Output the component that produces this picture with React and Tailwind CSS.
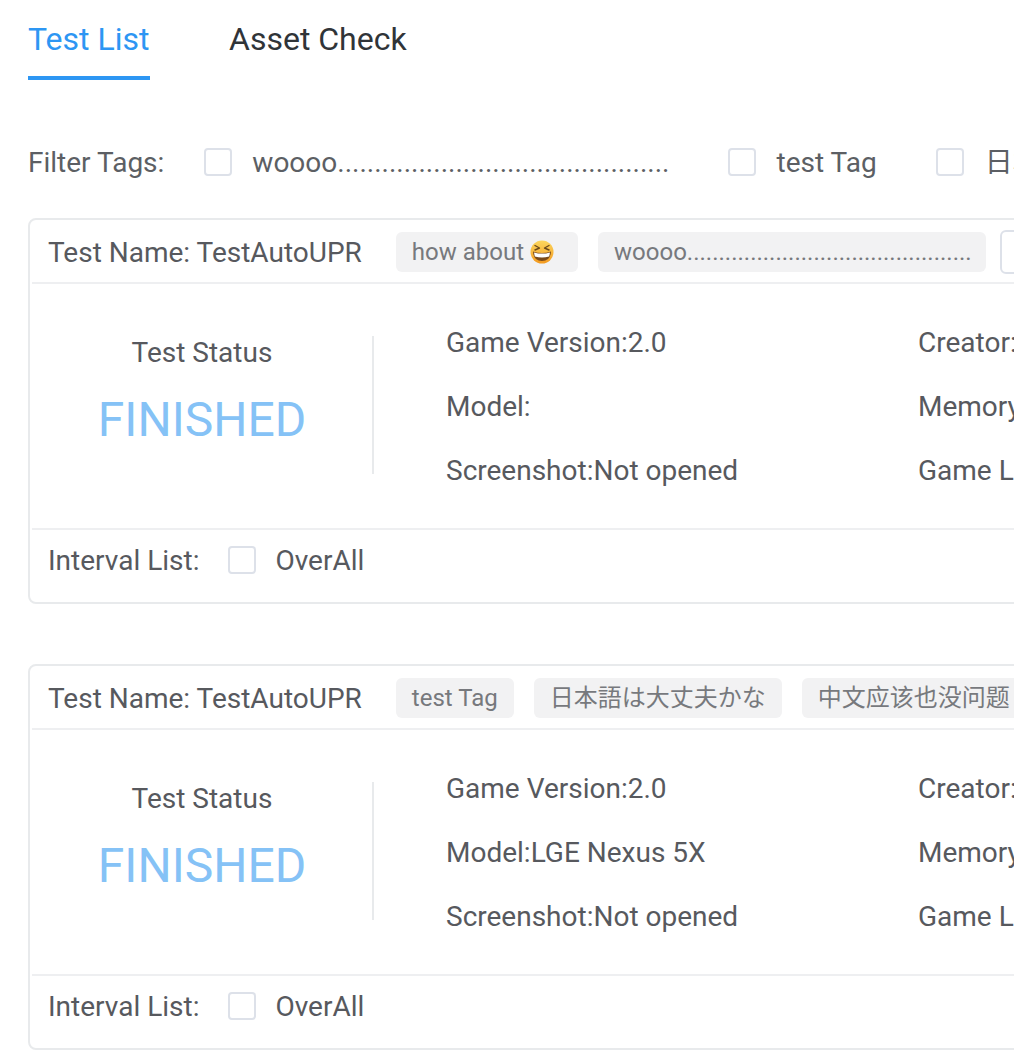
import React from "react";

const DOTS = ".............................................";

function Box() {
  return <span className="block w-[28px] h-[28px] shrink-0 bg-white border-2 border-[#dde1e9] rounded-[4px]" />;
}

function LaughEmoji() {
  return (
    <svg width="24" height="24" viewBox="0 0 24 24" className="shrink-0 ml-[6px] mr-[8px]">
      <defs>
        <linearGradient id="laugh" x1="0" y1="0" x2="0" y2="1">
          <stop offset="0" stopColor="#fcd75f" />
          <stop offset="1" stopColor="#f39a1f" />
        </linearGradient>
      </defs>
      <circle cx="12" cy="12" r="11.5" fill="url(#laugh)" />
      <path d="M5 5.5 L9.5 8 L5 10" fill="none" stroke="#6b4a1c" strokeWidth="1.4" strokeLinecap="round" strokeLinejoin="round" />
      <path d="M19 5.5 L14.5 8 L19 10" fill="none" stroke="#6b4a1c" strokeWidth="1.4" strokeLinecap="round" strokeLinejoin="round" />
      <path d="M3 11.5 Q12 14.5 21 11.5 Q20.5 21 12 21 Q3.5 21 3 11.5 Z" fill="#7a4a1a" />
      <path d="M4 12.4 Q12 14.8 20 12.4 L19.2 16.6 Q12 18.6 4.8 16.6 Z" fill="#fff" />
    </svg>
  );
}

function Tag({ children, pad = "px-[16px]" }) {
  return (
    <span className={`flex items-center h-[40px] shrink-0 ${pad} bg-[#f2f2f3] rounded-[6px] text-[24px] text-[#77797d] whitespace-nowrap`}>
      {children}
    </span>
  );
}

function Info({ children }) {
  return <div className="h-[64px] flex items-center pt-[2px] whitespace-nowrap">{children}</div>;
}

function TestCard({ tags, extra, model }) {
  return (
    <div className="w-[1200px] h-[386px] px-[2px] bg-white border-2 border-[#e8eaec] rounded-[8px]">
      {/* header */}
      <div className="h-[64px] flex items-center gap-[20px] pl-[16px] pt-[2px] border-b-2 border-[#eeeff1]">
        <span className="text-[28px] text-[#57595e] whitespace-nowrap mt-[2px] mr-[14px]">Test Name: TestAutoUPR</span>
        {tags}
        {extra}
      </div>

      {/* body */}
      <div className="h-[244px] flex items-center">
        <div className="w-[342px] h-[138px] -mt-[2px] pt-[1px] shrink-0 flex flex-col items-center border-r-2 border-[#e8eaec]">
          <span className="text-[28px] leading-[32px] text-[#57595e]">Test Status</span>
          <span className="text-[48px] leading-[56px] mt-[23px] text-[#85c2f6]">FINISHED</span>
        </div>
        <div className="w-[472px] shrink-0 ml-[72px] text-[28px] text-[#57595e]">
          <Info>Game Version:2.0</Info>
          <Info>{model}</Info>
          <Info>Screenshot:Not opened</Info>
        </div>
        <div className="shrink-0 text-[28px] text-[#57595e]">
          <Info>Creator:</Info>
          <Info>Memory:</Info>
          <Info>Game Log:</Info>
        </div>
      </div>

      {/* footer */}
      <div className="h-[74px] border-t-2 border-[#eeeff1]">
        <div className="h-[60px] flex items-center pl-[16px] text-[28px] text-[#57595e]">
          <span className="mt-[2px]">Interval List:</span>
          <span className="ml-[29px]"><Box /></span>
          <span className="ml-[19px] mt-[2px]">OverAll</span>
        </div>
      </div>
    </div>
  );
}

export default function App() {
  return (
    <div
      className="w-[1014px] h-[1062px] overflow-hidden bg-white pl-[28px]"
      style={{ fontFamily: 'Roboto, "Noto Sans CJK JP", sans-serif' }}
    >
      {/* tabs */}
      <div className="h-[80px] flex items-start gap-[79px] text-[32px]">
        <div className="w-[122px] h-[80px] pt-[16px] leading-[46px] text-[#2d96f3] border-b-4 border-[#2d96f3]">Test List</div>
        <div className="pt-[16px] leading-[46px] text-[#303438]">Asset Check</div>
      </div>

      {/* filter tags */}
      <div className="h-[138px] pt-[68px] w-[1200px]">
        <div className="h-[28px] flex items-center text-[28px] text-[#5c5f64] whitespace-nowrap">
          <span className="mt-[2px]">Filter Tags:</span>
          <span className="ml-[40px]"><Box /></span>
          <span className="ml-[20px] mt-[2px]">woooo{DOTS}</span>
          <span className="ml-[58px]"><Box /></span>
          <span className="ml-[21px] mt-[2px]">test Tag</span>
          <span className="ml-[59px]"><Box /></span>
          <span className="ml-[21px] mt-[2px]">日本語は大丈夫かな</span>
        </div>
      </div>

      <TestCard
        model="Model:"
        tags={
          <>
            <Tag>how about <LaughEmoji /></Tag>
            <Tag pad="pl-[16px] pr-[14px]">woooo{DOTS}</Tag>
          </>
        }
        extra={<span className="block w-[120px] h-[44px] shrink-0 -ml-[6px] bg-white border-2 border-[#dde1e9] rounded-[6px]" />}
      />

      <div className="h-[60px]" />

      <TestCard
        model="Model:LGE Nexus 5X"
        tags={
          <>
            <Tag>test Tag</Tag>
            <Tag>日本語は大丈夫かな</Tag>
            <Tag>中文应该也没问题</Tag>
          </>
        }
      />
    </div>
  );
}
